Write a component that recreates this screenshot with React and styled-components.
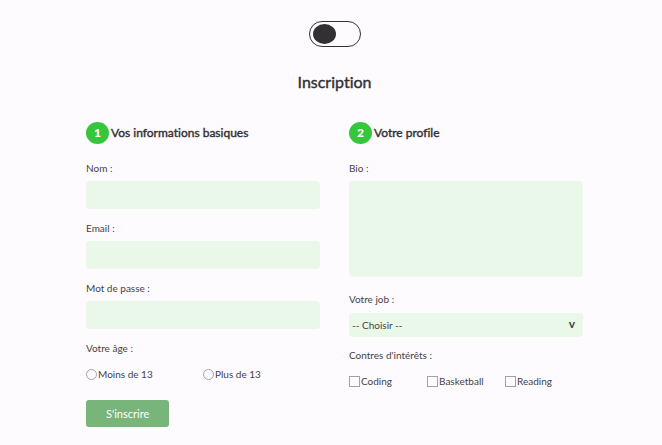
import React, { useState } from "react";
import styled, { createGlobalStyle } from "styled-components";

const ink = "#333033";
const soft = "#454245";
const field = "#eaf8ea";

const GlobalStyle = createGlobalStyle`
  *, *::before, *::after { box-sizing: border-box; }
  body {
    margin: 0;
    background: #fdfbfe;
    color: ${soft};
    font-family: Lato, sans-serif;
    font-size: 10px;
    line-height: 12px;
    font-variant-ligatures: none;
  }
  input, textarea, select, button { font: inherit; color: inherit; margin: 0; }
`;

const Page = styled.main`
  display: flex;
  flex-direction: column;
  align-items: center;
  padding: 21px 79px 18px 86px;
`;

const Toggle = styled.input`
  appearance: none;
  display: flex;
  align-items: center;
  width: 52px;
  height: 26px;
  padding: 0 3px;
  border: 1px solid ${ink};
  border-radius: 13px;
  cursor: pointer;

  &::before {
    content: "";
    width: 23px;
    height: 20px;
    border-radius: 50%;
    background: ${ink};
  }
  &:checked { justify-content: flex-end; }
`;

const Title = styled.h1`
  margin: 25px 0 30px;
  color: ${ink};
  font-size: 16px;
  line-height: 20px;
  font-weight: 400;
  -webkit-text-stroke: 0.4px ${ink};
`;

const Form = styled.form`
  display: grid;
  grid-template-columns: 1fr 1fr;
  column-gap: 29px;
  width: 100%;
`;

const Column = styled.section`
  display: flex;
  flex-direction: column;
  align-items: stretch;
`;

const Heading = styled.h2`
  display: flex;
  align-items: center;
  gap: 2px;
  margin: 0 0 18px;
  color: ${ink};
  font-size: 12px;
  line-height: 16px;
  font-weight: 400;
  -webkit-text-stroke: 0.4px ${ink};
`;

const Step = styled.span`
  display: grid;
  place-items: center;
  width: 23px;
  height: 22px;
  border-radius: 50%;
  background: #36c63b;
  color: #fff;
  font-weight: 900;
  -webkit-text-stroke: 0;
`;

const Label = styled.label`
  margin-bottom: 7px;
`;

const Input = styled.input`
  height: 28px;
  margin-bottom: 13px;
  padding: 0 8px;
  border: 0;
  border-radius: 4px;
  background: ${field};
`;

const Textarea = styled.textarea`
  height: 96px;
  margin-bottom: 16px;
  padding: 8px;
  border: 0;
  border-radius: 4px;
  background: ${field};
  resize: none;
`;

const SelectBox = styled.div`
  position: relative;
  margin: 1px 0 12px;
`;

const Select = styled.select`
  appearance: none;
  display: block;
  width: 100%;
  height: 24px;
  padding: 0 24px 0 3px;
  border: 0;
  border-radius: 4px;
  background: ${field};
`;

const Caret = styled.span`
  position: absolute;
  top: 5px;
  right: 8px;
  font-size: 12px;
  font-weight: 700;
  pointer-events: none;
`;

const Group = styled.fieldset`
  margin: 0;
  padding: 0;
  border: 0;
`;

const Legend = styled.legend`
  padding: 0;
  margin-bottom: 14px;
`;

const Options = styled.div`
  display: grid;
  grid-template-columns: repeat(${(p) => p.$count}, 1fr);
`;

const Option = styled.label`
  display: flex;
  align-items: center;
  gap: 1px;
`;

const Choice = styled.input`
  appearance: none;
  flex: none;
  width: 11px;
  height: 11px;
  border: 1px solid #a5a2a5;
  border-radius: ${(p) => (p.type === "radio" ? "50%" : "0")};

  &:checked { background: #36c63b; box-shadow: inset 0 0 0 2px #fff; }
`;

const Submit = styled.button`
  align-self: flex-start;
  height: 27px;
  margin-top: 20px;
  padding: 0 20px;
  border: 0;
  border-radius: 3px;
  background: #77b57a;
  color: #fff;
  font-size: 11px;
  cursor: pointer;
`;

const textFields = [
  { id: "nom", label: "Nom :", type: "text" },
  { id: "email", label: "Email :", type: "email" },
  { id: "password", label: "Mot de passe :", type: "password" },
];
const ages = ["Moins de 13", "Plus de 13"];
const interests = ["Coding", "Basketball", "Reading"];

export default function App() {
  const [on, setOn] = useState(false);
  return (
    <>
      <GlobalStyle />
      <Page>
        <Toggle
          type="checkbox"
          role="switch"
          aria-label="Thème"
          checked={on}
          onChange={(e) => setOn(e.target.checked)}
        />
        <Title>Inscription</Title>
        <Form onSubmit={(e) => e.preventDefault()}>
          <Column>
            <Heading><Step>1</Step>Vos informations basiques</Heading>
            {textFields.map((f) => (
              <React.Fragment key={f.id}>
                <Label htmlFor={f.id}>{f.label}</Label>
                <Input id={f.id} type={f.type} />
              </React.Fragment>
            ))}
            <Group>
              <Legend>Votre âge :</Legend>
              <Options $count={2}>
                {ages.map((a) => (
                  <Option key={a}><Choice type="radio" name="age" value={a} />{a}</Option>
                ))}
              </Options>
            </Group>
            <Submit type="submit">S'inscrire</Submit>
          </Column>
          <Column>
            <Heading><Step>2</Step>Votre profile</Heading>
            <Label htmlFor="bio">Bio :</Label>
            <Textarea id="bio" />
            <Label htmlFor="job">Votre job :</Label>
            <SelectBox>
              <Select id="job">
                <option>-- Choisir --</option>
              </Select>
              <Caret aria-hidden="true">v</Caret>
            </SelectBox>
            <Group>
              <Legend>Contres d'intérêts :</Legend>
              <Options $count={3}>
                {interests.map((i) => (
                  <Option key={i}><Choice type="checkbox" name="interests" value={i} />{i}</Option>
                ))}
              </Options>
            </Group>
          </Column>
        </Form>
      </Page>
    </>
  );
}
